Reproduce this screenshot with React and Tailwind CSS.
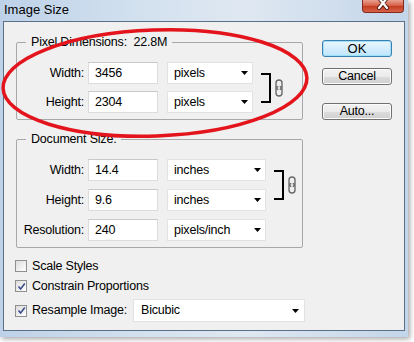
import React from "react";

const font = { fontFamily: '"Liberation Sans", Arial, sans-serif' };

function Arrow() {
  return (
    <svg width="7" height="4" viewBox="0 0 7 4" className="shrink-0">
      <path d="M0 0 H7 L3.5 4 Z" fill="#000" />
    </svg>
  );
}

function Input({ value }) {
  return (
    <div className="w-[70px] h-[22px] bg-white border border-[#dcdcdc] border-t-[#c9c9c9] flex items-center pl-[6px] text-[12.5px] tracking-[-0.2px] text-black leading-none">
      {value}
    </div>
  );
}

function Select({ value, w }) {
  return (
    <div
      className={`${w} h-[22px] bg-white border border-[#e2e2e2] flex items-center justify-between pl-[6px] pr-[4px] text-[12.5px] tracking-[-0.2px] text-black leading-none`}
    >
      <span>{value}</span>
      <Arrow />
    </div>
  );
}

function Chain() {
  return (
    <svg width="8" height="18" viewBox="0 0 8 18" className="shrink-0">
      <rect x="1" y="1" width="6" height="9.5" rx="3" fill="none" stroke="#6a6a6a" strokeWidth="1.4" />
      <rect x="1" y="7.5" width="6" height="9.5" rx="3" fill="none" stroke="#6a6a6a" strokeWidth="1.4" />
      <rect x="3.3" y="3" width="1.4" height="12" fill="#f0f0f0" />
    </svg>
  );
}

function Row({ label, value, unit, selW }) {
  return (
    <div className="flex items-center h-[22px]">
      <div className="w-[67px] text-right text-[12.5px] tracking-[-0.2px] text-black whitespace-nowrap">{label}</div>
      <div className="w-[4px]" />
      <Input value={value} />
      <div className="w-[9px]" />
      <Select value={unit} w={selW} />
    </div>
  );
}

function Checkbox({ checked }) {
  return (
    <div className="w-[12px] h-[12px] border border-[#8e8f8f] bg-[linear-gradient(135deg,#dcdcdc,#ffffff)] flex items-center justify-center shrink-0">
      {checked && (
        <svg width="9" height="9" viewBox="0 0 9 9">
          <path d="M1.5 4.5 L3.6 7 L7.8 1.5" fill="none" stroke="#3b4f8a" strokeWidth="1.6" />
        </svg>
      )}
    </div>
  );
}

function Button({ children, primary }) {
  return (
    <div
      className={
        primary
          ? "w-[70px] h-[17px] rounded-[3px] border border-[#3c7fb1] bg-[linear-gradient(#eaf6fd,#bee6fd)] shadow-[inset_0_0_0_1px_#9ee0fa] flex items-center justify-center text-[13px] text-black leading-none"
          : "w-[70px] h-[17px] rounded-[3px] border border-[#707070] bg-[linear-gradient(#f2f2f2_0%,#ebebeb_50%,#dddddd_51%,#cfcfcf_100%)] shadow-[inset_0_0_0_1px_#fcfcfc] flex items-center justify-center text-[12.5px] tracking-[-0.2px] text-black leading-none"
      }
    >
      {children}
    </div>
  );
}

export default function App() {
  return (
    <div className="w-[414px] h-[342px] bg-white relative overflow-hidden" style={font}>
      <div className="w-[408px] h-[337px] bg-[linear-gradient(90deg,#bdd1e8_0%,#d3e1ef_35%,#dfe8f2_60%,#c3d5e9_100%)] shadow-[2px_2px_5px_rgba(0,0,0,0.35)] flex flex-col">
        <div className="h-[21px] flex items-start justify-between pl-[4px] pr-[4px] shrink-0">
          <span className="text-[13px] text-black leading-none mt-[3px]">Image Size</span>
          <div className="w-[42px] h-[13px] rounded-b-[4px] border border-t-0 border-[#83291d] bg-[linear-gradient(#e9a08f,#d35b42_50%,#c43a1f_51%,#d7634a)] flex items-start justify-center overflow-hidden">
            <svg width="14" height="10" viewBox="0 0 14 10">
              <path d="M3 -2 L11 8 M11 -2 L3 8" stroke="#4a1a10" strokeWidth="4" strokeLinecap="round" />
              <path d="M3 -2 L11 8 M11 -2 L3 8" stroke="#ffffff" strokeWidth="2.2" strokeLinecap="round" />
            </svg>
          </div>
        </div>
        <div className="mx-[3px] h-[310px] border border-[#5b6f86] bg-[#f0f0f0] flex shrink-0">
          <div className="w-[300px] pl-[12px] pt-[12px] flex flex-col">
            <fieldset className="w-[287px] border border-[#a8a8a8] rounded-[2px] pb-[6px]">
              <legend className="ml-[9px] px-[5px] text-[12.5px] tracking-[-0.2px] text-black leading-[16px] whitespace-pre">Pixel Dimensions:  22.8M</legend>
              <div className="flex items-center pt-[12px]">
                <div className="flex flex-col gap-[7px]">
                  <Row label="Width:" value="3456" unit="pixels" selW="w-[86px]" />
                  <Row label="Height:" value="2304" unit="pixels" selW="w-[86px]" />
                </div>
                <div className="ml-[8px] w-[10px] h-[30px] border-y-2 border-r-2 border-black" />
                <div className="ml-[4px]">
                  <Chain />
                </div>
              </div>
            </fieldset>
            <fieldset className="mt-[11px] w-[287px] border border-[#a8a8a8] rounded-[2px] pb-[6px]">
              <legend className="ml-[9px] px-[5px] text-[12.5px] tracking-[-0.2px] text-black leading-[16px]">Document Size:</legend>
              <div className="flex flex-col gap-[8px] pt-[12px]">
                <div className="flex items-center">
                  <div className="flex flex-col gap-[8px]">
                    <Row label="Width:" value="14.4" unit="inches" selW="w-[99px]" />
                    <Row label="Height:" value="9.6" unit="inches" selW="w-[99px]" />
                  </div>
                  <div className="ml-[8px] w-[10px] h-[30px] border-y-2 border-r-2 border-black" />
                  <div className="ml-[4px]">
                    <Chain />
                  </div>
                </div>
                <Row label="Resolution:" value="240" unit="pixels/inch" selW="w-[99px]" />
              </div>
            </fieldset>
            <div className="mt-[8px] flex flex-col">
              <div className="h-[20px] flex items-center ml-[-1px]">
                <Checkbox />
                <span className="ml-[5px] text-[12.5px] tracking-[-0.2px] text-black whitespace-nowrap">Scale Styles</span>
              </div>
              <div className="h-[20px] flex items-center ml-[-1px]">
                <Checkbox checked />
                <span className="ml-[5px] text-[12.5px] tracking-[-0.2px] text-black whitespace-nowrap">Constrain Proportions</span>
              </div>
              <div className="mt-[3px] h-[23px] flex items-center ml-[-1px]">
                <div className="w-[118px] flex items-center shrink-0">
                  <Checkbox checked />
                  <span className="ml-[5px] text-[12.5px] tracking-[-0.2px] text-black whitespace-nowrap">Resample Image:</span>
                </div>
                <div className="w-[172px] h-[23px] shrink-0 bg-white border border-[#e2e2e2] flex items-center justify-between pl-[7px] pr-[5px] text-[12.5px] tracking-[-0.2px] text-black leading-none">
                  <span>Bicubic</span>
                  <Arrow />
                </div>
              </div>
            </div>
          </div>
          <div className="pl-[18px] pt-[18px] flex flex-col">
            <Button primary>OK</Button>
            <div className="h-[11px]" />
            <Button>Cancel</Button>
            <div className="h-[18px]" />
            <Button>Auto...</Button>
          </div>
        </div>
      </div>
      <svg className="absolute left-0 top-0 pointer-events-none" width="414" height="342">
        <ellipse cx="155" cy="83" rx="152" ry="53" fill="none" stroke="#e3141c" strokeWidth="3.5" transform="rotate(-2 155 83)" />
      </svg>
    </div>
  );
}
